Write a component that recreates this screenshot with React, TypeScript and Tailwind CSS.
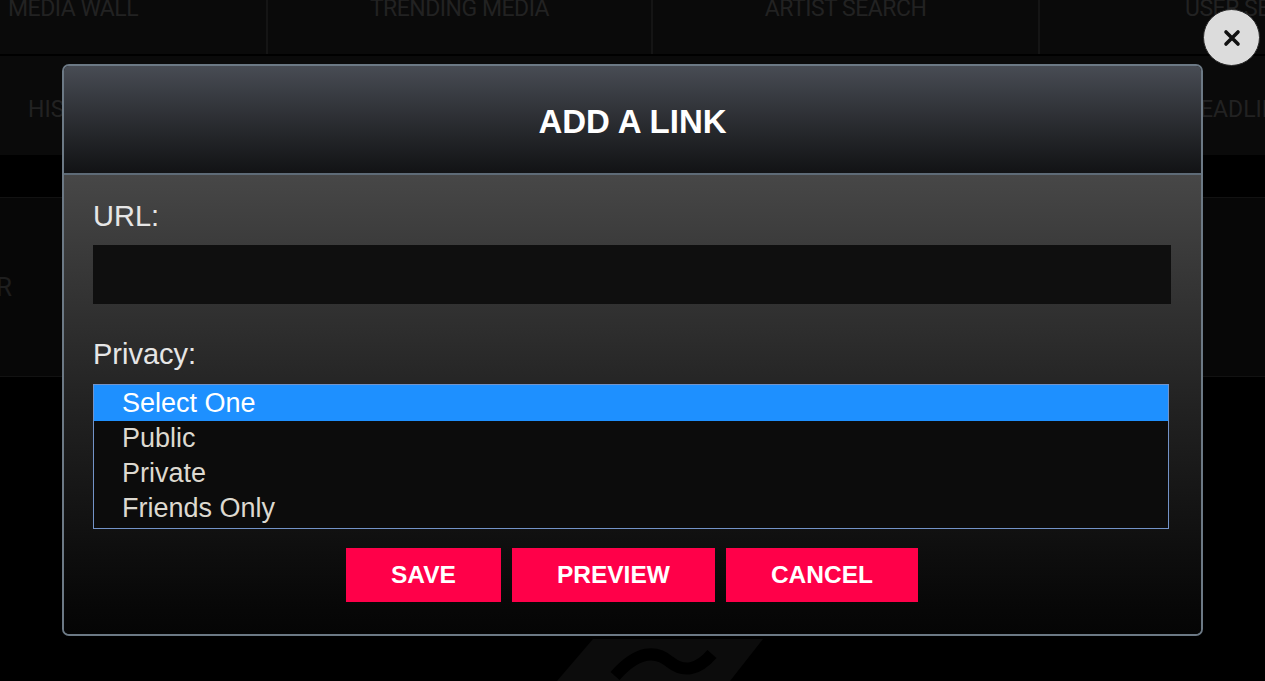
import React from "react";

const options = ["Select One", "Public", "Private", "Friends Only"];

function CloseIcon() {
  return (
    <svg width="18" height="18" viewBox="0 0 18 18">
      <path d="M3 3 L15 15 M15 3 L3 15" stroke="#111" strokeWidth="3.6" strokeLinecap="round" />
    </svg>
  );
}

export default function App() {
  return (
    <div className="relative w-[1265px] h-[681px] overflow-hidden bg-black font-['Liberation_Sans',Arial,sans-serif]">
      {/* page behind the modal */}
      <div className="flex h-[56px] bg-[#0a0a0a] border-b-2 border-[#000] text-[23px] text-[#222] uppercase font-['Roboto',sans-serif] tracking-[-0.5px]">
        <div className="w-[268px] shrink-0 border-r-2 border-[#151515] pl-[8px] -mt-[8px]">Media Wall</div>
        <div className="w-[385px] shrink-0 border-r-2 border-[#151515] text-center -mt-[8px]">Trending Media</div>
        <div className="w-[387px] shrink-0 border-r-2 border-[#151515] text-center -mt-[8px]">Artist Search</div>
        <div className="flex-1 pl-[145px] -mt-[8px] whitespace-nowrap">User Search</div>
      </div>
      <div className="flex items-center justify-between h-[99px] bg-[#0a0a0a] text-[23px] text-[#222] uppercase font-['Roboto',sans-serif]">
        <div className="pl-[28px] pt-[10px]">History</div>
        <div className="pt-[10px] whitespace-nowrap -mr-[40px]">Headlines</div>
      </div>
      <div className="h-[42px] bg-black" />
      <div className="flex items-center h-[180px] bg-[#070707] border-y border-[#121212] text-[26px] text-[#1e1e1e] font-['Roboto',sans-serif]">
        <div className="-ml-[4px]">R</div>
      </div>

      {/* faint logo at the bottom */}
      <svg className="absolute left-[540px] top-[636px]" width="240" height="45" viewBox="0 0 240 45">
        <path d="M53 3 L223 3 L190 45 L17 45 Z" fill="#0c0c0c" />
        <path d="M75 40 C98 14 116 14 130 26 C144 37 158 34 172 18" stroke="#000" strokeWidth="12" fill="none" />
      </svg>

      {/* close button */}
      <button className="absolute left-[1203px] top-[9px] w-[57px] h-[57px] rounded-full bg-[#dcdcdc] border border-[#2a2a2a] flex items-center justify-center">
        <CloseIcon />
      </button>

      {/* modal */}
      <div className="absolute left-[62px] top-[64px] w-[1141px] h-[572px] rounded-[7px] border-2 border-[#6c7985] overflow-hidden flex flex-col">
        <div className="h-[107px] flex items-center justify-center bg-gradient-to-b from-[#484c54] to-[#121315]">
          <h1 className="text-[33px] font-bold text-white pt-[4px]">ADD A LINK</h1>
        </div>
        <div className="h-[2px] bg-[#5e6b77]" />
        <div className="flex-1 flex flex-col pl-[29px] pr-[30px] pt-[24px] bg-gradient-to-b from-[#474747] via-[#222] to-[#050505]">
          <label className="text-[29px] leading-[34px] text-[#e6e6e6]">URL:</label>
          <input className="mt-[12px] h-[59px] w-full bg-[#0f0f0f] outline-none" />
          <label className="mt-[33px] text-[29px] leading-[34px] text-[#e6e6e6]">Privacy:</label>
          <div className="mt-[13px] mr-[2px] h-[145px] border-[1.5px] border-[#7393c8] bg-[#0c0c0c] flex flex-col">
            {options.map((o, i) => (
              <div
                key={o}
                className={
                  i === 0
                    ? "h-[36px] pl-[28px] flex items-center text-[27px] text-white bg-[#1e90ff]"
                    : "h-[35px] pl-[28px] flex items-center text-[27px] text-[#ddd9d0]"
                }
              >
                {o}
              </div>
            ))}
          </div>
          <div className="mt-[19px] flex justify-center gap-[11px]">
            <button className="h-[54px] px-[45px] bg-[#ff0049] text-white text-[24.5px] font-bold">SAVE</button>
            <button className="h-[54px] px-[45px] bg-[#ff0049] text-white text-[24.5px] font-bold">PREVIEW</button>
            <button className="h-[54px] px-[45px] bg-[#ff0049] text-white text-[24.5px] font-bold">CANCEL</button>
          </div>
        </div>
      </div>
    </div>
  );
}
